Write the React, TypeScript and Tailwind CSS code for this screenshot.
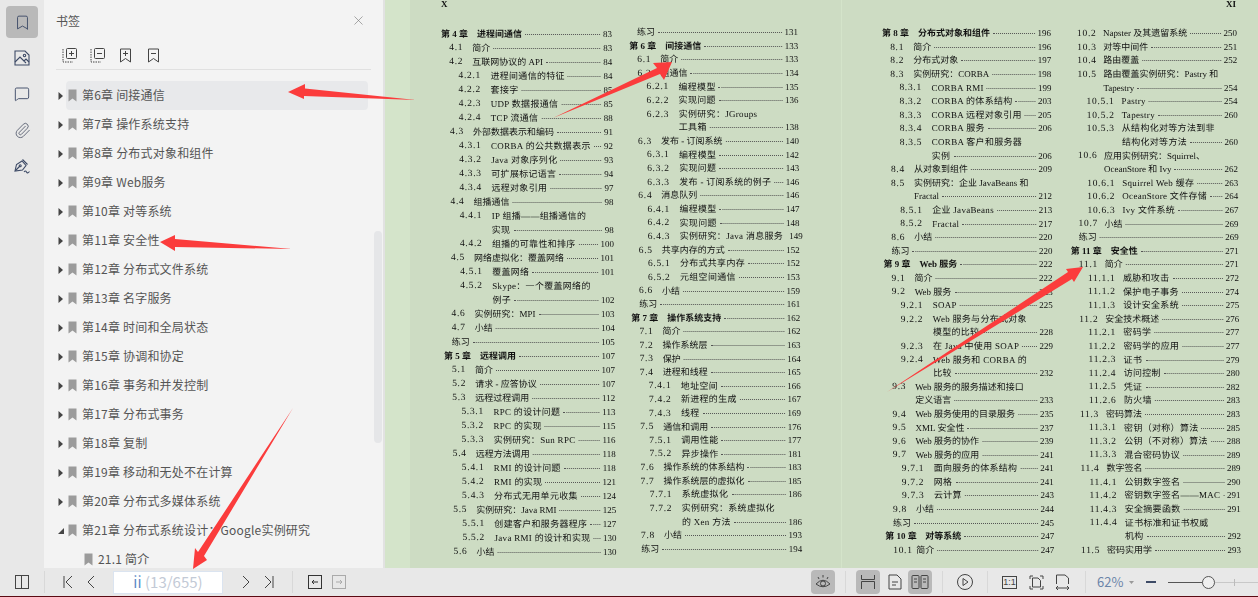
import { Bookmark, MessageSquare, Paperclip, X } from 'lucide-react';

type Row = [number, string, string, string?];

const bookmarks = [
  '第6章 间接通信', '第7章 操作系统支持', '第8章 分布式对象和组件', '第9章 Web服务',
  '第10章 对等系统', '第11章 安全性', '第12章 分布式文件系统', '第13章 名字服务',
  '第14章 时间和全局状态', '第15章 协调和协定', '第16章 事务和并发控制', '第17章 分布式事务',
  '第18章 复制', '第19章 移动和无处不在计算', '第20章 分布式多媒体系统',
];

const col1: Row[] = [
  [0, '第 4 章', '进程间通信', '83'], [1, '4.1', '简介', '83'], [1, '4.2', '互联网协议的 API', '84'],
  [2, '4.2.1', '进程间通信的特征', '84'], [2, '4.2.2', '套接字', '85'], [2, '4.2.3', 'UDP 数据报通信', '85'],
  [2, '4.2.4', 'TCP 流通信', '88'], [1, '4.3', '外部数据表示和编码', '91'], [2, '4.3.1', 'CORBA 的公共数据表示', '92'],
  [2, '4.3.2', 'Java 对象序列化', '93'], [2, '4.3.3', '可扩展标记语言', '94'], [2, '4.3.4', '远程对象引用', '97'],
  [1, '4.4', '组播通信', '98'], [2, '4.4.1', 'IP 组播——组播通信的'], [2, '', '实现', '98'],
  [2, '4.4.2', '组播的可靠性和排序', '100'], [1, '4.5', '网络虚拟化：覆盖网络', '101'], [2, '4.5.1', '覆盖网络', '101'],
  [2, '4.5.2', 'Skype：一个覆盖网络的'], [2, '', '例子', '102'], [1, '4.6', '实例研究：MPI', '103'],
  [1, '4.7', '小结', '104'], [3, '', '练习', '105'], [0, '第 5 章', '远程调用', '107'],
  [1, '5.1', '简介', '107'], [1, '5.2', '请求 - 应答协议', '107'], [1, '5.3', '远程过程调用', '112'],
  [2, '5.3.1', 'RPC 的设计问题', '113'], [2, '5.3.2', 'RPC 的实现', '115'], [2, '5.3.3', '实例研究：Sun RPC', '116'],
  [1, '5.4', '远程方法调用', '118'], [2, '5.4.1', 'RMI 的设计问题', '118'], [2, '5.4.2', 'RMI 的实现', '121'],
  [2, '5.4.3', '分布式无用单元收集', '124'], [1, '5.5', '实例研究：Java RMI', '125'], [2, '5.5.1', '创建客户和服务器程序', '127'],
  [2, '5.5.2', 'Java RMI 的设计和实现', '130'], [1, '5.6', '小结', '130'],
];

const col2: Row[] = [
  [3, '', '练习', '131'], [0, '第 6 章', '间接通信', '133'], [1, '6.1', '简介', '133'], [1, '6.2', '组通信', '134'],
  [2, '6.2.1', '编程模型', '135'], [2, '6.2.2', '实现问题', '136'], [2, '6.2.3', '实例研究：JGroups'], [2, '', '工具箱', '138'],
  [1, '6.3', '发布 - 订阅系统', '140'], [2, '6.3.1', '编程模型', '142'], [2, '6.3.2', '实现问题', '143'],
  [2, '6.3.3', '发布 - 订阅系统的例子', '146'], [1, '6.4', '消息队列', '146'], [2, '6.4.1', '编程模型', '147'],
  [2, '6.4.2', '实现问题', '148'], [2, '6.4.3', '实例研究：Java 消息服务', '149'], [1, '6.5', '共享内存的方式', '152'],
  [2, '6.5.1', '分布式共享内存', '152'], [2, '6.5.2', '元组空间通信', '153'], [1, '6.6', '小结', '159'], [3, '', '练习', '161'],
  [0, '第 7 章', '操作系统支持', '162'], [1, '7.1', '简介', '162'], [1, '7.2', '操作系统层', '163'], [1, '7.3', '保护', '164'],
  [1, '7.4', '进程和线程', '165'], [2, '7.4.1', '地址空间', '166'], [2, '7.4.2', '新进程的生成', '167'], [2, '7.4.3', '线程', '169'],
  [1, '7.5', '通信和调用', '176'], [2, '7.5.1', '调用性能', '177'], [2, '7.5.2', '异步操作', '181'],
  [1, '7.6', '操作系统的体系结构', '183'], [1, '7.7', '操作系统层的虚拟化', '185'], [2, '7.7.1', '系统虚拟化', '186'],
  [2, '7.7.2', '实例研究：系统虚拟化'], [2, '', '的 Xen 方法', '186'], [1, '7.8', '小结', '193'], [3, '', '练习', '194'],
];

const col3: Row[] = [
  [0, '第 8 章', '分布式对象和组件', '196'], [1, '8.1', '简介', '196'], [1, '8.2', '分布式对象', '197'],
  [1, '8.3', '实例研究：CORBA', '198'], [2, '8.3.1', 'CORBA RMI', '199'], [2, '8.3.2', 'CORBA 的体系结构', '203'],
  [2, '8.3.3', 'CORBA 远程对象引用', '205'], [2, '8.3.4', 'CORBA 服务', '206'], [2, '8.3.5', 'CORBA 客户和服务器'],
  [2, '', '实例', '206'], [1, '8.4', '从对象到组件', '209'], [1, '8.5', '实例研究：企业 JavaBeans 和'], [1, '', 'Fractal', '212'],
  [2, '8.5.1', '企业 JavaBeans', '213'], [2, '8.5.2', 'Fractal', '217'], [1, '8.6', '小结', '220'], [3, '', '练习', '220'],
  [0, '第 9 章', 'Web 服务', '222'], [1, '9.1', '简介', '222'], [1, '9.2', 'Web 服务', '223'], [2, '9.2.1', 'SOAP', '225'],
  [2, '9.2.2', 'Web 服务与分布式对象'], [2, '', '模型的比较', '228'], [2, '9.2.3', '在 Java 中使用 SOAP', '229'],
  [2, '9.2.4', 'Web 服务和 CORBA 的'], [2, '', '比较', '232'], [1, '9.3', 'Web 服务的服务描述和接口'], [1, '', '定义语言', '233'],
  [1, '9.4', 'Web 服务使用的目录服务', '235'], [1, '9.5', 'XML 安全性', '237'], [1, '9.6', 'Web 服务的协作', '239'],
  [1, '9.7', 'Web 服务的应用', '241'], [2, '9.7.1', '面向服务的体系结构', '241'], [2, '9.7.2', '网格', '241'],
  [2, '9.7.3', '云计算', '243'], [1, '9.8', '小结', '244'], [3, '', '练习', '245'], [0, '第 10 章', '对等系统', '247'],
  [1, '10.1', '简介', '247'],
];

const col4: Row[] = [
  [1, '10.2', 'Napster 及其遗留系统', '250'], [1, '10.3', '对等中间件', '251'], [1, '10.4', '路由覆盖', '252'],
  [1, '10.5', '路由覆盖实例研究：Pastry 和'], [1, '', 'Tapestry', '254'], [2, '10.5.1', 'Pastry', '254'],
  [2, '10.5.2', 'Tapestry', '260'], [2, '10.5.3', '从结构化对等方法到非'], [2, '', '结构化对等方法', '260'],
  [1, '10.6', '应用实例研究：Squirrel、'], [1, '', 'OceanStore 和 Ivy', '262'], [2, '10.6.1', 'Squirrel Web 缓存', '263'],
  [2, '10.6.2', 'OceanStore 文件存储', '264'], [2, '10.6.3', 'Ivy 文件系统', '267'], [1, '10.7', '小结', '269'], [3, '', '练习', '269'],
  [0, '第 11 章', '安全性', '271'], [1, '11.1', '简介', '271'], [2, '11.1.1', '威胁和攻击', '272'], [2, '11.1.2', '保护电子事务', '274'],
  [2, '11.1.3', '设计安全系统', '275'], [1, '11.2', '安全技术概述', '276'], [2, '11.2.1', '密码学', '277'],
  [2, '11.2.2', '密码学的应用', '277'], [2, '11.2.3', '证书', '279'], [2, '11.2.4', '访问控制', '280'], [2, '11.2.5', '凭证', '282'],
  [2, '11.2.6', '防火墙', '283'], [1, '11.3', '密码算法', '283'], [2, '11.3.1', '密钥（对称）算法', '285'],
  [2, '11.3.2', '公钥（不对称）算法', '288'], [2, '11.3.3', '混合密码协议', '289'], [1, '11.4', '数字签名', '289'],
  [2, '11.4.1', '公钥数字签名', '290'], [2, '11.4.2', '密钥数字签名——MAC', '291'], [2, '11.4.3', '安全摘要函数', '291'],
  [2, '11.4.4', '证书标准和证书权威'], [2, '', '机构', '292'], [1, '11.5', '密码实用学', '293'],
];

const TocRow = ({ row, tall, wide }: { row: Row; tall?: boolean; wide?: boolean }) => {
  const [level, num, title, page] = row;
  const height = tall ? 'h-[14px]' : 'h-[13.6px]';
  if (level === 0) {
    return (
      <div className={`flex items-center font-bold whitespace-nowrap ${height}`}>
        <span className={`shrink-0 ${num.length > 5 ? 'w-[40px]' : 'w-[36px]'}`}>{num}</span>
        <span>{title}</span>
        <span className="flex-1 mx-[3px] border-b border-dotted border-[#555]" />
        <span className="font-normal">{page}</span>
      </div>
    );
  }
  let indent = 'ml-[8px]';
  let numWidth = 'w-[23px]';
  if (level === 2) {
    indent = 'ml-[17px]';
    numWidth = wide ? 'w-[35px]' : 'w-[32px]';
  }
  if (level === 1 && wide) numWidth = 'w-[26px]';
  return (
    <div className={`flex items-center whitespace-nowrap ${height} ${indent}`}>
      {level !== 3 && <span className={`shrink-0 tracking-[0.7px] text-[9.5px] ${numWidth}`}>{num}</span>}
      <span className={level === 2 ? 'tracking-[0.3px]' : ''}>{title}</span>
      {page && <span className="flex-1 mx-[3px] border-b border-dotted border-[#555]" />}
      {page && <span>{page}</span>}
    </div>
  );
};

const Column = ({ rows, className, tall, wide }: { rows: Row[]; className: string; tall?: boolean; wide?: boolean }) => (
  <div className={`shrink-0 origin-top-left ${className}`}>
    {rows.map((row, i) => (
      <TocRow key={i} row={row} tall={tall} wide={wide} />
    ))}
  </div>
);

const Caret = () => (
  <svg width="6" height="10" viewBox="0 0 6 10" className="shrink-0">
    <path d="M0.5 1 L5 5 L0.5 9 Z" fill="#444" />
  </svg>
);

const MarkIcon = () => (
  <svg width="9" height="13" viewBox="0 0 9 13" className="shrink-0">
    <path d="M0.5 0.5 H8.5 V12.5 L4.5 9.5 L0.5 12.5 Z" fill="#9b9b9b" />
  </svg>
);

const BookRow = ({ label, active }: { label: string; active?: boolean }) => (
  <div className="flex items-center h-[29px] shrink-0">
    <div className="w-[8px] flex shrink-0">
      <Caret />
    </div>
    <div className={`flex items-center flex-1 h-full gap-[5px] rounded-sm pl-[2px] ${active ? 'bg-[#e8e9eb]' : ''}`}>
      <MarkIcon />
      <span className="-mt-[1px] tracking-[0.2px]">{label}</span>
    </div>
  </div>
);

const ToolIcon = ({ minus, book }: { minus?: boolean; book?: boolean }) => (
  <svg width="15" height="15" viewBox="0 0 15 15" fill="none" stroke="#444" strokeWidth="1">
    {book ? (
      <>
        <path d="M2.5 1 H12.5 V14 L7.5 10.5 L2.5 14 Z" />
        <path d="M5 5.5 H10" />
        {!minus && <path d="M7.5 3 V8" />}
      </>
    ) : (
      <>
        <path d="M1 1 V14 H11" strokeDasharray="1.5 1" />
        <rect x="4.5" y="0.5" width="10" height="10" rx="1" />
        <path d="M7 5.5 H12" />
        {!minus && <path d="M9.5 3 V8" />}
      </>
    )}
  </svg>
);

const Sep = ({ className }: { className: string }) => <div className={`w-px h-[22px] bg-[#d8d8d8] shrink-0 ${className}`} />;

const Chevron = ({ dir, bar, className }: { dir: 'l' | 'r'; bar?: boolean; className: string }) => (
  <svg width="10" height="14" viewBox="0 0 10 14" fill="none" stroke="#444" strokeWidth="1" className={`shrink-0 ${className}`}>
    {dir === 'l' ? <path d={bar ? 'M9 1 L3 7 L9 13' : 'M8 1 L2 7 L8 13'} /> : <path d={bar ? 'M1 1 L7 7 L1 13' : 'M2 1 L8 7 L2 13'} />}
    {bar && (dir === 'l' ? <path d="M1 1 V13" /> : <path d="M9 1 V13" />)}
  </svg>
);

export default function App() {
  return (
    <div className="relative w-[1258px] h-[597px] overflow-hidden flex flex-col text-[#555] font-['Noto_Sans_CJK_SC','Noto_Sans',sans-serif]">
      <div className="flex flex-1 min-h-0">
        {/* left rail */}
        <div className="w-[44px] shrink-0 bg-[#e8e8e8] flex flex-col items-center pt-[6px] gap-[4px] text-[#3d4a66]">
          <div className="w-[32px] h-[32px] rounded bg-[#b9b9b9] flex items-center justify-center">
            <Bookmark size={17} strokeWidth={1.3} />
          </div>
          <div className="w-[32px] h-[32px] flex items-center justify-center">
            <svg width="16" height="16" viewBox="0 0 16 16" fill="none" stroke="currentColor" strokeWidth="1.1">
              <path d="M1 1 H11 L15 5 V15 H1 Z" />
              <circle cx="10.5" cy="5.5" r="1.2" />
              <path d="M1 12 L6 7 L12 13 M10 11 L12 9 L15 12" />
            </svg>
          </div>
          <div className="w-[32px] h-[32px] flex items-center justify-center">
            <MessageSquare size={16} strokeWidth={1.4} />
          </div>
          <div className="w-[32px] h-[32px] flex items-center justify-center text-[#5c6273]">
            <Paperclip size={17} strokeWidth={1.3} />
          </div>
          <div className="w-[32px] h-[32px] flex items-center justify-center">
            <svg width="18" height="18" viewBox="0 0 18 18" fill="none" stroke="currentColor" strokeWidth="1.1">
              <path d="M2 14 L3.5 7.5 L9 4 L13 8.5 L9.5 13 Z" />
              <path d="M9.5 2.5 L14.5 7.5 M2.5 13.5 L6.5 9.5" />
              <circle cx="7.2" cy="8.8" r="1" />
              <path d="M11 15 Q12.5 13 13.5 15 T16.5 14.5" />
            </svg>
          </div>
        </div>

        {/* bookmark panel */}
        <div className="relative w-[341px] shrink-0 bg-[#f3f3f3] border-r-2 border-[#e2e2e2] pl-[14px] pr-[15px] flex flex-col overflow-hidden text-[12px] leading-none">
          <div className="flex items-center justify-between h-[41px] pr-[2px] shrink-0 text-[#555]">
            <span className="ml-[-2px] mt-[1px]">书签</span>
            <X size={15} strokeWidth={1} className="text-[#777]" />
          </div>
          <div className="flex items-center h-[29px] ml-[-2px] mr-[-3px] pl-[6px] gap-[13px] border-b border-[#e0e0e0] shrink-0">
            <ToolIcon />
            <ToolIcon minus />
            <ToolIcon book />
            <ToolIcon book minus />
          </div>
          <div className="h-[11px] shrink-0" />
          <BookRow label={bookmarks[0]} active />
          {bookmarks.slice(1).map((b) => (
            <BookRow key={b} label={b} />
          ))}
          <div className="flex items-center h-[29px] shrink-0">
            <div className="w-[8px] flex shrink-0">
              <svg width="6" height="6" viewBox="0 0 6 6">
                <path d="M6 0 V6 H0 Z" fill="#444" />
              </svg>
            </div>
            <div className="flex items-center flex-1 h-full gap-[5px] pl-[2px]">
              <MarkIcon />
              <span className="-mt-[1px] tracking-[0.2px]">第21章 分布式系统设计：Google实例研究</span>
            </div>
          </div>
          <div className="flex items-center h-[29px] shrink-0 pl-[26px] gap-[5px]">
            <MarkIcon />
            <span className="-mt-[1px] tracking-[0.2px]">21.1 简介</span>
          </div>
          <div className="absolute left-[330px] top-[231px] w-[8px] h-[212px] rounded-full bg-[#e5e6e8]" />
        </div>

        {/* document viewer */}
        <div className="flex-1 flex min-w-0 overflow-hidden bg-[#d4e4ca] text-[9px] leading-none text-[#111] font-['Liberation_Serif','Noto_Sans_CJK_SC',serif]">
          <div className="w-[25px] shrink-0" />
          <div className="w-[432px] shrink-0 bg-[#cddcc3] border-r border-[#d4e4ca] pt-[27px] pl-[31px] relative blur-[0.35px]">
            <div className="absolute left-[31px] top-0 text-[9px] font-bold">X</div>
            <div className="flex">
              <Column rows={col1} tall className="w-[171px] mr-[17px] skew-x-[0.5deg]" />
              <Column rows={col2} className="w-[169px] -mt-[1px] skew-x-[0.45deg]" />
            </div>
          </div>
          <div className="flex-1 bg-[#cddcc3] pt-[27px] pl-[40px] relative blur-[0.35px]">
            <div className="absolute right-[22px] top-0 text-[9px] font-bold">XI</div>
            <div className="flex gap-[18px]">
              <Column rows={col3} className="w-[169px] skew-x-[0.35deg]" />
              <Column rows={col4} wide className="w-[168px] skew-x-[0.44deg]" />
            </div>
          </div>
        </div>
      </div>

      {/* bottom toolbar */}
      <div className="h-[29px] shrink-0 bg-[#e8e8e8] border-b border-[#5a0a12] flex items-center text-[#444]">
        <svg width="14" height="14" viewBox="0 0 14 14" fill="none" stroke="#444" className="ml-[15px] shrink-0">
          <rect x="0.5" y="0.5" width="13" height="13" />
          <path d="M6.5 1 V13" />
        </svg>
        <Sep className="ml-[15px]" />
        <Chevron dir="l" bar className="ml-[18px]" />
        <Chevron dir="l" className="ml-[13px]" />
        <div className="ml-[17px] w-[110px] h-[23px] bg-white border border-[#dbe4f0] flex items-center justify-center text-[15px] text-[#c3cad6] shrink-0">
          <span className="text-[#5b8ac6]">ii</span>&nbsp;(13/655)
        </div>
        <Chevron dir="r" className="ml-[18px]" />
        <Chevron dir="r" bar className="ml-[13px]" />
        <Sep className="ml-[18px]" />
        <svg width="14" height="14" viewBox="0 0 14 14" fill="none" stroke="#333" className="ml-[15px] shrink-0">
          <rect x="0.5" y="0.5" width="13" height="13" />
          <path d="M10 7 H4 M6 5 L4 7 L6 9" />
        </svg>
        <svg width="14" height="14" viewBox="0 0 14 14" fill="none" stroke="#aaa" className="ml-[10px] shrink-0">
          <rect x="0.5" y="0.5" width="13" height="13" />
          <path d="M4 7 H10 M8 5 L10 7 L8 9" />
        </svg>

        {/* right part */}
        <div className="ml-[465px] w-[24px] h-[24px] rounded bg-[#b9b9b9] flex items-center justify-center shrink-0">
          <svg width="18" height="16" viewBox="0 0 18 16" fill="none" stroke="#444">
            <path d="M2 10 Q9 2.5 16 10 Q9 15.5 2 10 Z" />
            <circle cx="9" cy="9.5" r="2.5" />
            <path d="M4 3 L5 5 M9 1 V3.5 M14 3 L13 5" />
          </svg>
        </div>
        <Sep className="ml-[10px]" />
        <div className="ml-[10px] w-[24px] h-[24px] rounded bg-[#b9b9b9] flex items-center justify-center shrink-0">
          <svg width="16" height="16" viewBox="0 0 16 16" fill="none" stroke="#444">
            <path d="M1.5 1 V5.5 H14.5 V1 M1.5 15 V7.5 H14.5 V15" />
          </svg>
        </div>
        <svg width="14" height="16" viewBox="0 0 14 16" fill="none" stroke="#444" className="ml-[8px] shrink-0">
          <path d="M1 1 H9 L13 5 V15 H1 Z" />
          <path d="M4 8 H10 M4 11 H8" />
        </svg>
        <div className="ml-[6px] w-[24px] h-[24px] rounded bg-[#b9b9b9] flex items-center justify-center shrink-0">
          <svg width="18" height="14" viewBox="0 0 18 14" fill="none" stroke="#444">
            <rect x="1" y="0.5" width="7" height="13" rx="1" />
            <rect x="10" y="0.5" width="7" height="13" rx="1" />
            <path d="M3 4 H6 M3 7 H6 M12 4 H15 M12 7 H15" />
          </svg>
        </div>
        <Sep className="ml-[10px]" />
        <svg width="16" height="16" viewBox="0 0 16 16" fill="none" stroke="#444" className="ml-[14px] shrink-0">
          <circle cx="8" cy="8" r="7.5" />
          <path d="M6 4.5 L11 8 L6 11.5 Z" />
        </svg>
        <Sep className="ml-[14px]" />
        <div className="ml-[14px] w-[15px] h-[13px] border border-[#444] text-[9px] leading-[11px] text-center shrink-0 font-['Liberation_Sans',sans-serif]">1:1</div>
        <svg width="15" height="15" viewBox="0 0 15 15" fill="none" stroke="#444" className="ml-[12px] shrink-0">
          <path d="M1 4 V1 H4 M11 1 H14 V4 M14 11 V14 H11 M4 14 H1 V11" />
          <path d="M3.5 3 H9 L11.5 5.5 V12 H3.5 Z" />
        </svg>
        <svg width="15" height="16" viewBox="0 0 15 16" fill="none" stroke="#444" className="ml-[11px] shrink-0">
          <path d="M1.5 10 V1 H10 L13.5 4 V10" />
          <path d="M1 14 H14 M3 12 L1 14 L3 16 M12 12 L14 14 L12 16" />
        </svg>
        <Sep className="ml-[15px]" />
        <span className="ml-[11px] text-[13px] text-[#6b84a8] shrink-0">62%</span>
        <svg width="5" height="3" viewBox="0 0 5 3" className="ml-[6px] shrink-0">
          <path d="M0 0 H5 L2.5 3 Z" fill="#999" />
        </svg>
        <div className="ml-[12px] w-[10px] h-[2px] bg-[#3d4a66] shrink-0" />
        <div className="relative ml-[12px] flex-1 h-px bg-[#c8c8c8]">
          <div className="h-px w-[35px] bg-[#555]" />
          <div className="absolute left-[34px] -top-[6px] w-[13px] h-[13px] rounded-full bg-[#efefef] border border-[#555]" />
          <div className="absolute left-[66px] -top-[3px] w-px h-[7px] bg-[#bbb]" />
        </div>
      </div>

      {/* red annotation arrows */}
      <svg width="1258" height="597" viewBox="0 0 1258 597" className="absolute left-0 top-0 pointer-events-none" fill="#fb3c3c">
        <polygon points="288,92 305,84 305,88.5 416,100 304,96 304,99" />
        <polygon points="160,242 175,235 175,239 292,249 175,247 175,251" />
        <polygon points="672,62 653,63 657,68 553,118 660,74 664,80" />
        <polygon points="1083,267 1066,269 1068,272 887,392 1072,279 1074,282" />
        <polygon points="193,569 195,548 198,552 293,408 204,556 207,560" />
      </svg>
    </div>
  );
}
